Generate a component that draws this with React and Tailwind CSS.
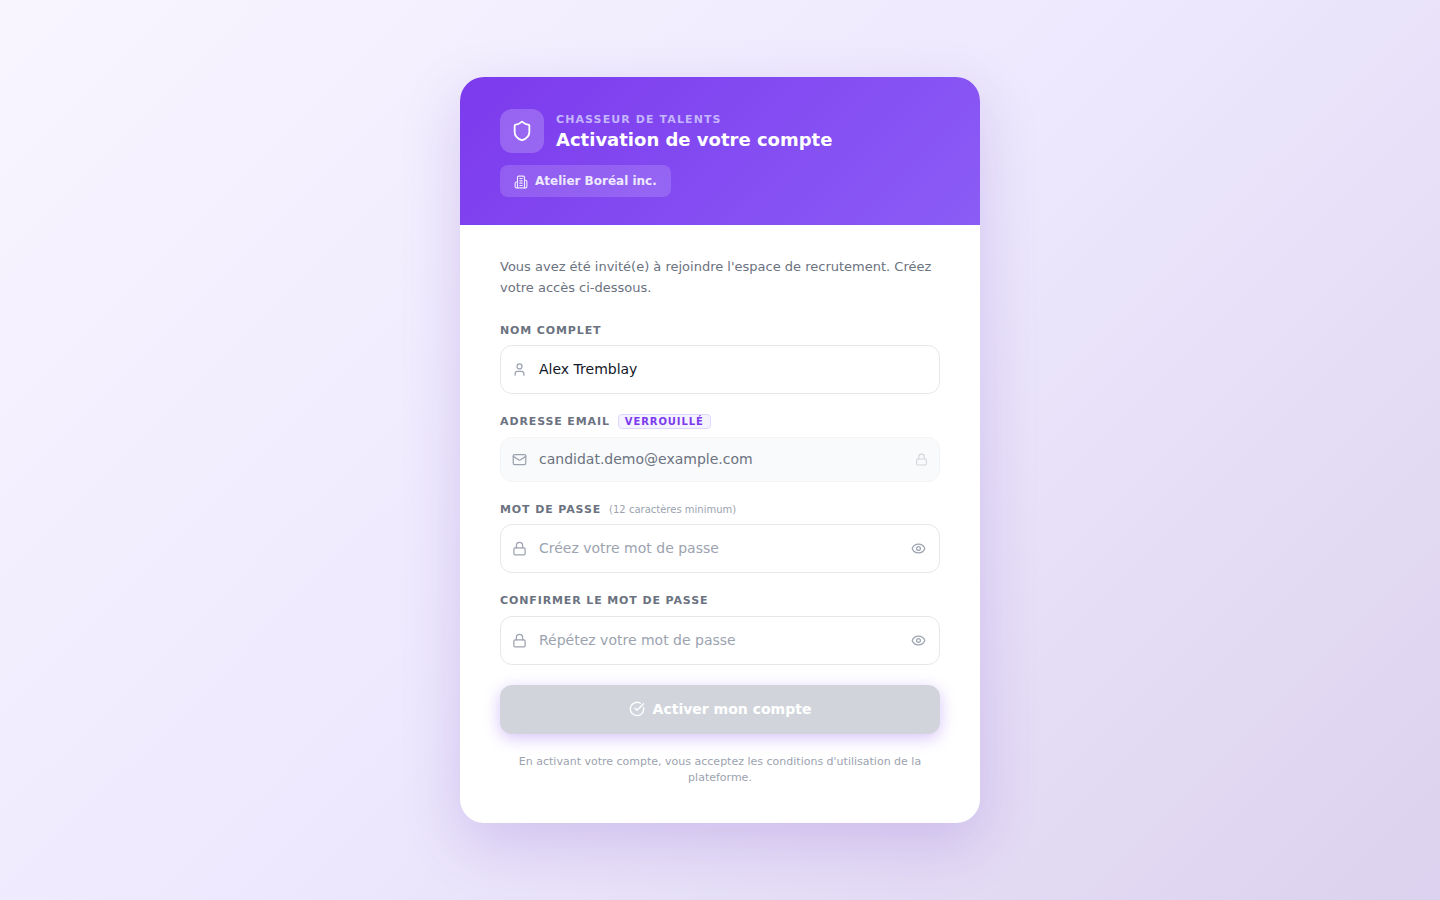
import React from 'react';
import { Shield, User, Mail, Lock, Eye, CircleCheckBig } from 'lucide-react';

function Label({ children, extra, className = 'mb-[6px]' }) {
  return (
    <div className={`flex items-center gap-2 h-4 ${className}`}>
      <span className="text-[11px] font-bold tracking-[0.88px] text-[#6b7280] uppercase">{children}</span>
      {extra}
    </div>
  );
}

function PasswordField({ placeholder }) {
  return (
    <div className="flex items-center h-[49px] rounded-xl border border-[#e5e7eb] bg-white pl-[11px] pr-[13px]">
      <Lock className="w-[15px] h-[15px] text-[#9ca3af] shrink-0" />
      <span className="ml-3 mb-[2px] flex-1 text-sm text-[#9ca3af]">{placeholder}</span>
      <Eye className="w-[15px] h-[15px] text-[#9ca3af] shrink-0" />
    </div>
  );
}

function BuildingIcon() {
  return (
    <svg className="w-[14px] h-[14px] text-[#ede9fe] mt-[2px]" viewBox="0 0 24 24" fill="none" stroke="currentColor" strokeWidth="2" strokeLinecap="round" strokeLinejoin="round">
      <path d="M6 22V4a2 2 0 0 1 2-2h8a2 2 0 0 1 2 2v18Z" />
      <path d="M6 12H4a2 2 0 0 0-2 2v6a2 2 0 0 0 2 2h2" />
      <path d="M18 9h2a2 2 0 0 1 2 2v9a2 2 0 0 1-2 2h-2" />
      <path d="M10 6h4" />
      <path d="M10 10h4" />
      <path d="M10 14h4" />
      <path d="M10 18h4" />
    </svg>
  );
}

export default function App() {
  return (
    <div className="min-h-screen flex items-center justify-center bg-[linear-gradient(135deg,#f8f5ff_0%,#ede8fd_50%,#dcd1ee_100%)] font-['DejaVu_Sans',sans-serif]">
      <div className="w-[520px] bg-white rounded-3xl overflow-hidden shadow-[0_20px_60px_rgba(91,33,182,0.18)]">
        <div className="h-[148px] px-10 pt-8 bg-[linear-gradient(135deg,#7c3aed,#8b5cf6)]">
          <div className="flex items-center gap-3">
            <div className="w-11 h-11 rounded-xl bg-white/20 flex items-center justify-center">
              <Shield className="w-[22px] h-[22px] text-white" strokeWidth={2} />
            </div>
            <div className="pt-[2px]">
              <div className="text-[11px] font-bold tracking-[1.1px] text-[#c4b5fd] leading-4">CHASSEUR DE TALENTS</div>
              <div className="text-lg font-bold text-white leading-6">Activation de votre compte</div>
            </div>
          </div>
          <div className="mt-3 inline-flex items-center gap-[7px] h-8 px-[14px] rounded-lg bg-white/15">
            <BuildingIcon />
            <span className="text-xs font-semibold text-[#ede9fe]">Atelier Boréal inc.</span>
          </div>
        </div>

        <div className="px-10 pt-[31px] pb-[37px]">
          <p className="text-[13px] leading-[21px] text-[#6b7280] mb-[25px]">
            Vous avez été invité(e) à rejoindre l'espace de recrutement. Créez votre accès ci-dessous.
          </p>

          <Label>Nom complet</Label>
          <div className="flex items-center h-[49px] rounded-xl border border-[#e5e7eb] bg-white pl-[11px] pr-3">
            <User className="w-[15px] h-[15px] text-[#9ca3af] shrink-0" />
            <span className="ml-3 mb-[2px] text-sm text-[#111827]">Alex Tremblay</span>
          </div>

          <div className="mt-5">
            <Label
              className="mb-[7px]"
              extra={
                <span className="mb-[2px] text-[10px] font-bold tracking-[0.9px] leading-[13px] px-[6px] rounded border border-[#ddd6fe] bg-[#f5f3ff] text-[#7c3aed]">
                  VERROUILLÉ
                </span>
              }
            >
              Adresse email
            </Label>
            <div className="flex items-center h-[45px] rounded-xl border border-[#f3f4f6] bg-[#f9fafb] pl-[11px] pr-[11px]">
              <Mail className="w-[15px] h-[15px] text-[#9ca3af] shrink-0" />
              <span className="ml-3 mb-[2px] flex-1 text-sm text-[#6b7280]">candidat.demo@example.com</span>
              <Lock className="w-[13px] h-[13px] text-[#d1d5db] shrink-0" />
            </div>
          </div>

          <div className="mt-5">
            <Label extra={<span className="mb-[2px] text-[10px] text-[#9ca3af]">(12 caractères minimum)</span>}>Mot de passe</Label>
            <PasswordField placeholder="Créez votre mot de passe" />
          </div>

          <div className="mt-5">
            <Label className="mb-[7px]">Confirmer le mot de passe</Label>
            <PasswordField placeholder="Répétez votre mot de passe" />
          </div>

          <button className="mt-5 w-full h-[49px] rounded-xl bg-[#d1d5db] flex items-center justify-center gap-2 text-white text-sm font-bold shadow-[0_4px_16px_rgba(124,58,237,0.3)]">
            <CircleCheckBig className="w-4 h-4 mb-[2px]" />
            <span className="mb-[2px]">Activer mon compte</span>
          </button>

          <p className="mt-5 text-[11px] leading-4 text-[#9ca3af] text-center">
            En activant votre compte, vous acceptez les conditions d'utilisation de la plateforme.
          </p>
        </div>
      </div>
    </div>
  );
}
